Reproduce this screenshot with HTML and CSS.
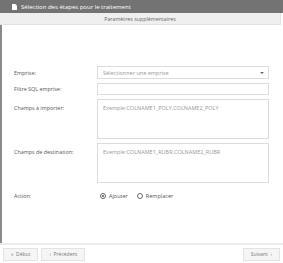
FILE: index.html
```html
<!DOCTYPE html>
<html lang="fr">

<head>
    <meta charset="UTF-8">
    <title>Sélection des étapes</title>
    <link rel="stylesheet" href="styles.css">
</head>

<body>
    <div class="wizard">
        <div class="wizard-header">
            <svg class="doc-icon" width="5" height="6" viewBox="0 0 5 6">
                <path d="M0 0H3.5L5 1.5V6H0Z" fill="#fff"/>
                <path d="M3.5 0V1.5H5" fill="#bbb"/>
            </svg>
            <span>Sélection des étapes pour le traitement</span>
        </div>
        <div class="wizard-sub">Paramètres supplémentaires</div>

        <div class="wizard-body">
            <div class="row">
                <label>Emprise:</label>
                <div class="select">
                    <span>Sélectionner une emprise</span>
                    <span class="caret"></span>
                </div>
            </div>
            <div class="row">
                <label>Filtre SQL emprise:</label>
                <input type="text">
            </div>
            <div class="row top">
                <label>Champs à importer:</label>
                <textarea placeholder="Exemple:COLNAME1_POLY,COLNAME2_POLY"></textarea>
            </div>
            <div class="row top">
                <label>Champs de destination:</label>
                <textarea placeholder="Exemple:COLNAME1_RUBR,COLNAME2_RUBR"></textarea>
            </div>
            <div class="row action">
                <label>Action:</label>
                <div class="radios">
                    <span class="radio checked"></span><span>Ajouter</span>
                    <span class="radio"></span><span>Remplacer</span>
                </div>
            </div>
        </div>

        <div class="wizard-footer">
            <button class="btn">&laquo;&nbsp; Début</button>
            <button class="btn">&lsaquo;&nbsp; Précédent</button>
            <span class="spacer"></span>
            <button class="btn">Suivant &nbsp;&rsaquo;</button>
        </div>
    </div>
</body>

</html>
```

FILE: styles.css
```css
* {
    box-sizing: border-box;
}

body {
    margin: 0;
    font-family: "Open Sans", sans-serif;
    background: #fff;
}

.wizard {
    width: 283px;
    height: 263px;
    display: flex;
    flex-direction: column;
}

.wizard-header {
    height: 13px;
    background-color: #737373;
    color: #fff;
    font-size: 6px;
    display: flex;
    align-items: center;
    padding-left: 12px;
}

.doc-icon {
    margin-right: 4px;
}

.wizard-sub {
    height: 12px;
    margin-right: 2px;
    background-color: #efefef;
    border-bottom: 1px solid #e2e2e2;
    border-right: 1px solid #e2e2e2;
    color: #666;
    font-size: 5.3px;
    display: flex;
    align-items: center;
    justify-content: center;
}

.wizard-body {
    flex: 1;
    border-left: 2px solid #8a8a8a;
    padding: 41px 0 0 12px;
}

.row {
    display: flex;
    align-items: center;
    margin-bottom: 4px;
}

.row.top {
    align-items: flex-start;
}

.row.top label {
    padding-top: 5px;
}

.row label {
    width: 83px;
    font-size: 5.4px;
    color: #555;
}

.select,
.row input,
.row textarea {
    width: 172px;
    height: 13px;
    border: 1px solid #dcdcdc;
    background: #fff;
    font-family: "Open Sans", sans-serif;
    font-size: 5.5px;
    color: #999;
}

.select {
    display: flex;
    align-items: center;
    justify-content: space-between;
    padding: 0 4px 0 5px;
}

.caret {
    width: 0;
    height: 0;
    border-left: 2px solid transparent;
    border-right: 2px solid transparent;
    border-top: 2px solid #666;
}

.row input {
    height: 12px;
}

.row textarea {
    height: 40px;
    resize: none;
    padding: 4px 5px;
    margin: 0;
}

.row textarea::placeholder {
    color: #999;
}

.row.action {
    margin-top: 9px;
}

.radios {
    display: flex;
    align-items: center;
    font-size: 5.5px;
    color: #555;
    padding-left: 3px;
}

.radio {
    width: 6px;
    height: 6px;
    border: 1px solid #666;
    border-radius: 50%;
    margin-right: 3px;
    position: relative;
}

.radio.checked::after {
    content: "";
    position: absolute;
    left: 1px;
    top: 1px;
    width: 2px;
    height: 2px;
    border-radius: 50%;
    background: #555;
}

.radios span:nth-child(2) {
    margin-right: 9px;
}

.wizard-footer {
    height: 20px;
    border-top: 2px solid #ececec;
    display: flex;
    align-items: center;
    padding: 0 3px;
    gap: 3px;
}

.spacer {
    flex: 1;
}

.btn {
    height: 13px;
    padding: 0 7px;
    border: 1px solid #e3e3e3;
    background: #f5f5f5;
    color: #777;
    font-family: "Open Sans", sans-serif;
    font-size: 5px;
}
```
